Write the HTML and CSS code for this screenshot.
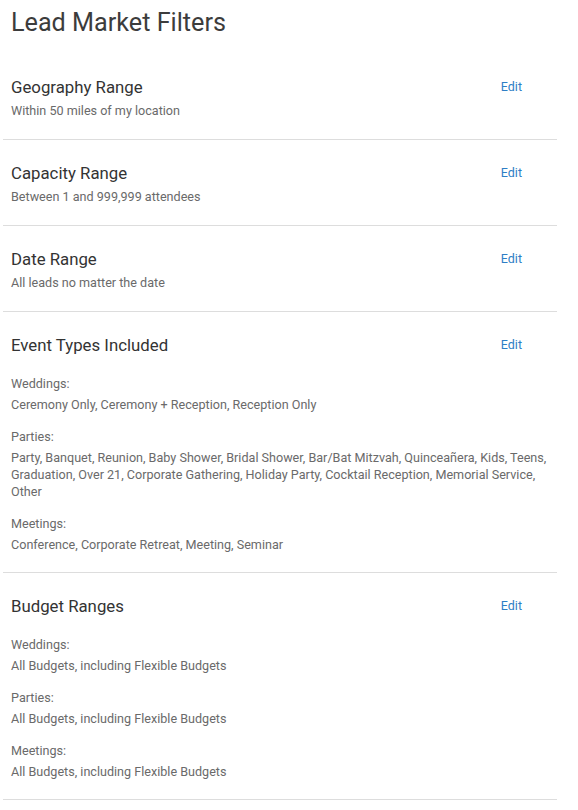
FILE: index.html
```html
<!DOCTYPE html>
<html lang="en">
<head>
<meta charset="utf-8">
<title>Lead Market Filters</title>
<link rel="stylesheet" href="styles.css">
</head>
<body>
<main class="page">
  <h1 class="page-title">Lead Market Filters</h1>

  <section class="filter">
    <div class="filter-head">
      <h2 class="filter-title">Geography Range</h2>
      <a class="edit-link" href="#">Edit</a>
    </div>
    <p class="filter-value">Within 50 miles of my location</p>
  </section>

  <section class="filter">
    <div class="filter-head">
      <h2 class="filter-title">Capacity Range</h2>
      <a class="edit-link" href="#">Edit</a>
    </div>
    <p class="filter-value">Between 1 and 999,999 attendees</p>
  </section>

  <section class="filter">
    <div class="filter-head">
      <h2 class="filter-title">Date Range</h2>
      <a class="edit-link" href="#">Edit</a>
    </div>
    <p class="filter-value">All leads no matter the date</p>
  </section>

  <section class="filter filter-grouped">
    <div class="filter-head">
      <h2 class="filter-title">Event Types Included</h2>
      <a class="edit-link" href="#">Edit</a>
    </div>
    <div class="groups">
      <div class="group">
        <div class="group-label">Weddings:</div>
        <p class="filter-value">Ceremony Only, Ceremony + Reception, Reception Only</p>
      </div>
      <div class="group">
        <div class="group-label">Parties:</div>
        <p class="filter-value">Party, Banquet, Reunion, Baby Shower, Bridal Shower, Bar/Bat Mitzvah, Quinceañera, Kids, Teens, Graduation, Over 21, Corporate Gathering, Holiday Party, Cocktail Reception, Memorial Service, Other</p>
      </div>
      <div class="group">
        <div class="group-label">Meetings:</div>
        <p class="filter-value">Conference, Corporate Retreat, Meeting, Seminar</p>
      </div>
    </div>
  </section>

  <section class="filter filter-grouped">
    <div class="filter-head">
      <h2 class="filter-title">Budget Ranges</h2>
      <a class="edit-link" href="#">Edit</a>
    </div>
    <div class="groups">
      <div class="group">
        <div class="group-label">Weddings:</div>
        <p class="filter-value">All Budgets, including Flexible Budgets</p>
      </div>
      <div class="group">
        <div class="group-label">Parties:</div>
        <p class="filter-value">All Budgets, including Flexible Budgets</p>
      </div>
      <div class="group">
        <div class="group-label">Meetings:</div>
        <p class="filter-value">All Budgets, including Flexible Budgets</p>
      </div>
    </div>
  </section>
</main>
</body>
</html>
```

FILE: styles.css
```css
* { box-sizing: border-box; }

html, body {
  margin: 0;
  padding: 0;
  background: #ffffff;
}

body {
  font-family: "Roboto", "Inter", "Liberation Sans", sans-serif;
  color: #333333;
}

.page {
  width: 554px;
  margin-left: 3px;
}

.page-title {
  margin: 7px 0 15px;
  padding: 0 8px;
  font-size: 25.2px;
  line-height: 32px;
  font-weight: 400;
  color: #3c3c3c;
}

.filter {
  padding: 21px 8px 20px;
  border-bottom: 1px solid #dddddd;
}

.filter-grouped {
  padding-bottom: 19px;
}

.filter-head {
  display: flex;
  justify-content: space-between;
  align-items: center;
  padding-right: 27px;
  margin-bottom: 3px;
}

.filter-title {
  margin: 0;
  font-size: 16.8px;
  line-height: 24px;
  font-weight: 400;
  color: #333333;
}

.edit-link {
  font-size: 12.5px;
  line-height: 24px;
  color: #2e7ec5;
  text-decoration: none;
}

.filter-value {
  margin: 0;
  font-size: 12.6px;
  line-height: 17px;
  color: #6a6a6a;
}

.groups {
  display: flex;
  flex-direction: column;
  gap: 15px;
  margin-top: 18px;
}

.group-label {
  font-size: 12.6px;
  line-height: 17px;
  color: #6a6a6a;
  margin-bottom: 4px;
}
```
